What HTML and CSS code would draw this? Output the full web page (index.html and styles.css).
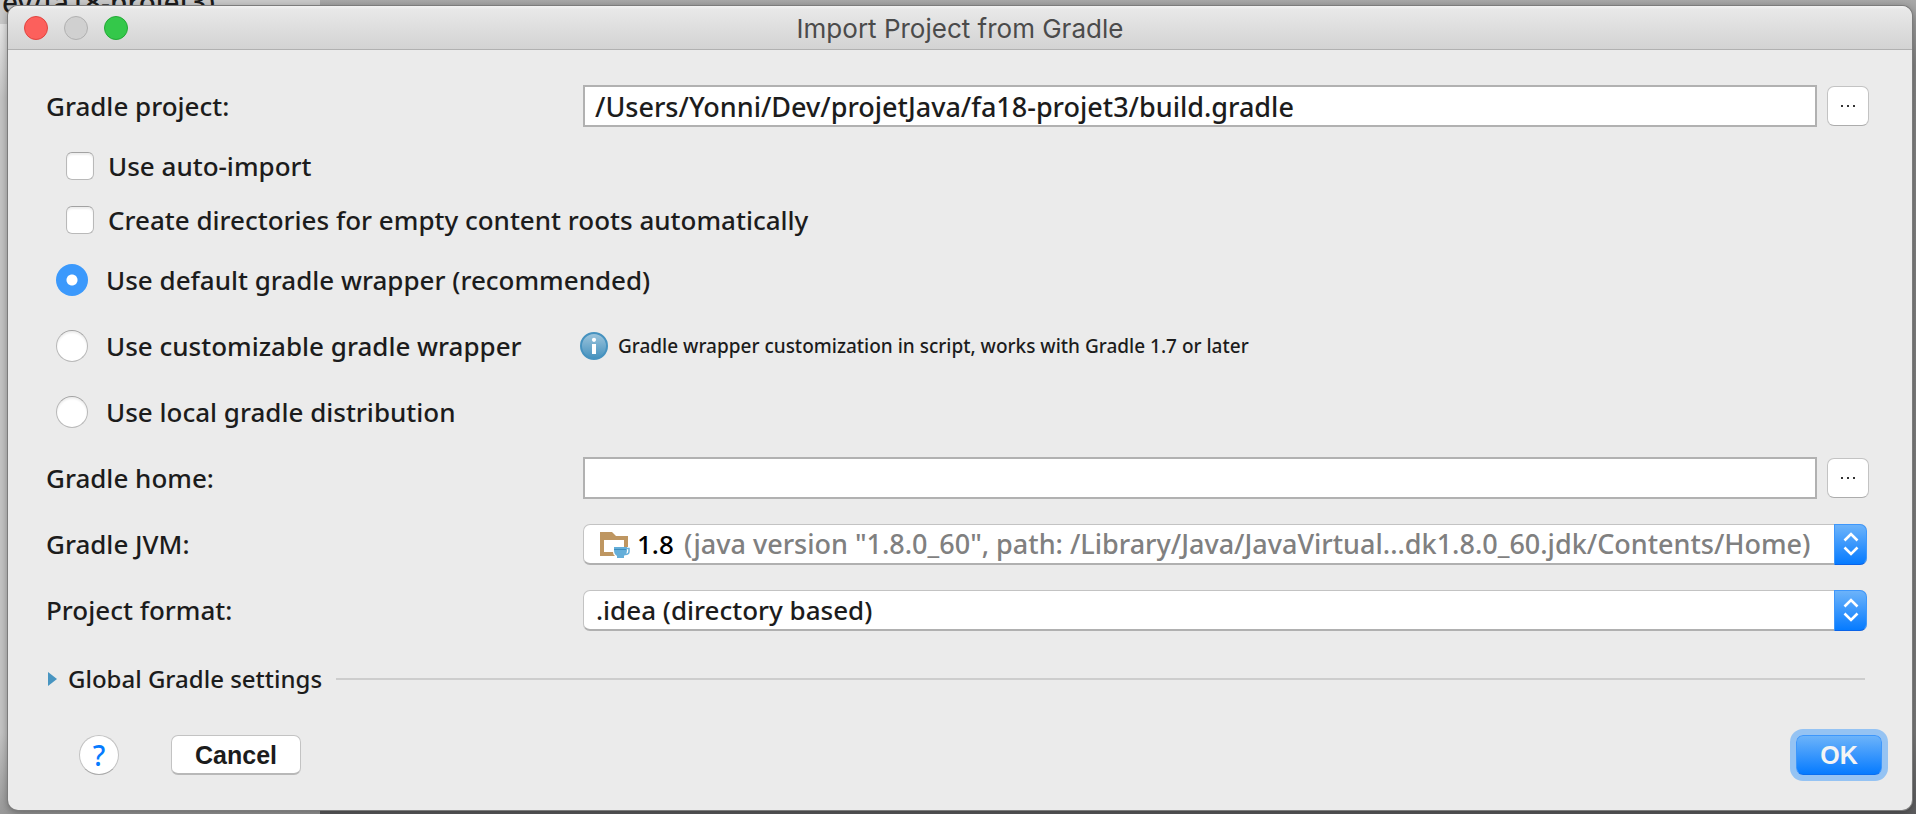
FILE: index.html
```html
<!DOCTYPE html>
<html lang="en">
<head>
<meta charset="utf-8">
<title>Import Project from Gradle</title>
<link rel="stylesheet" href="styles.css">
</head>
<body>
<div class="backdrop"><div class="back-window"><div class="back-title">ev/fa18-projet3)</div></div></div>
<main class="dialog">
  <header class="titlebar">
    <div class="lights">
      <button class="light close" type="button" aria-label="Close"></button>
      <button class="light minimize" type="button" aria-label="Minimize" disabled></button>
      <button class="light maximize" type="button" aria-label="Zoom"></button>
    </div>
    <h1 class="title">Import Project from Gradle</h1>
  </header>
  <form class="form">
    <div class="row">
      <label for="project">Gradle project:</label>
      <div class="field">
        <input class="text" id="project" type="text" value="/Users/Yonni/Dev/projetJava/fa18-projet3/build.gradle">
        <button class="browse" type="button" aria-label="Browse for project"><svg width="16" height="4" viewBox="0 0 16 4"><path d="M1 1h2v2H1zM7 1h2v2H7zM13 1h2v2h-2z" fill="#333"/></svg></button>
      </div>
    </div>
    <div class="checks">
      <label class="option"><input class="check" type="checkbox">Use auto-import</label>
      <label class="option"><input class="check" type="checkbox">Create directories for empty content roots automatically</label>
    </div>
    <div class="radios">
      <label class="option"><input class="radio" type="radio" name="wrapper" checked>Use default gradle wrapper (recommended)</label>
      <div class="row radio-row">
        <label class="option"><input class="radio" type="radio" name="wrapper">Use customizable gradle wrapper</label>
        <p class="hint">
          <svg width="28" height="28" viewBox="0 0 28 28"><defs><linearGradient id="info" x1="0" y1="0" x2="0" y2="1"><stop offset="0" stop-color="#9fc6dd"/><stop offset="1" stop-color="#4390bd"/></linearGradient></defs><circle cx="14" cy="14" r="13" fill="url(#info)" stroke="#4692bf" stroke-width="2"/><circle cx="14" cy="7.8" r="2.1" fill="#fff"/><path d="M12 12h4v10h-4z" fill="#fff"/></svg>
          Gradle wrapper customization in script, works with Gradle 1.7 or later
        </p>
      </div>
      <label class="option"><input class="radio" type="radio" name="wrapper">Use local gradle distribution</label>
    </div>
    <div class="rows">
      <div class="row">
        <label for="home">Gradle home:</label>
        <div class="field">
          <input class="text" id="home" type="text">
          <button class="browse" type="button" aria-label="Browse for home"><svg width="16" height="4" viewBox="0 0 16 4"><path d="M1 1h2v2H1zM7 1h2v2H7zM13 1h2v2h-2z" fill="#333"/></svg></button>
        </div>
      </div>
      <div class="row">
        <label for="jvm">Gradle JVM:</label>
        <div class="combo">
          <select class="select with-icon" id="jvm"><option>1.8</option></select>
          <span class="jvm-info">
            <svg width="32" height="32" viewBox="0 0 32 32"><path fill="#be9661" fill-rule="evenodd" d="M2 4h12l4 4h12v11h-4v-7H6v12h9c0 2 1 3 2 4H2z"/><path fill="#64aed9" d="M16 19h13v3c0 4-2 5-3 6v2h-7v-2c-1-1-3-2-3-6z"/><path fill="#3c8dbd" d="M16 21h12v1H16z"/><path fill="none" stroke="#64aed9" stroke-width="1.5" d="M28 20.500h3v3c0 2-1 3-4 3"/></svg>
            <span class="jvm-path">(java version "1.8.0_60", path: /Library/Java/JavaVirtual...dk1.8.0_60.jdk/Contents/Home)</span>
          </span>
          <span class="arrows"><svg width="16" height="28" viewBox="0 0 16 28"><path d="M1.500 10.500 8 4l6.500 6.500M1.500 17.500 8 24l6.500-6.500" fill="none" stroke="#fff" stroke-width="2.600"/></svg></span>
        </div>
      </div>
      <div class="row">
        <label for="format">Project format:</label>
        <div class="combo">
          <select class="select" id="format"><option>.idea (directory based)</option></select>
          <span class="arrows"><svg width="16" height="28" viewBox="0 0 16 28"><path d="M1.500 10.500 8 4l6.500 6.500M1.500 17.500 8 24l6.500-6.500" fill="none" stroke="#fff" stroke-width="2.600"/></svg></span>
        </div>
      </div>
    </div>
    <button class="section" type="button" aria-expanded="false">
      <svg width="9" height="14" viewBox="0 0 9 14"><path d="M0 0l9 7-9 7z" fill="#4895c1"/></svg>
      <span>Global Gradle settings</span>
      <span class="rule"></span>
    </button>
    <footer class="footer">
      <button class="help" type="button">?</button>
      <button class="push" type="button">Cancel</button>
      <button class="push primary" type="submit">OK</button>
    </footer>
  </form>
</main>
</body>
</html>
```
FILE: styles.css
```css
* { box-sizing: border-box; }

body {
  margin: 0;
  min-height: 100vh;
  padding: 6px 4px 4px 8px;
  display: flex;
  background: linear-gradient(#a8a8a8, #858585 8%, #7b7b7b 90%, #5c5c5e);
  color: #1c1c1c;
  font: 500 26px/32px "Noto Sans", "Open Sans", sans-serif;
  overflow: hidden;
}

button, input, select { font: inherit; color: inherit; margin: 0; padding: 0; }
h1, p { margin: 0; }
svg { display: block; flex: none; }

.backdrop { position: absolute; inset: 0; overflow: hidden; }
.back-window {
  width: 320px;
  height: 100%;
  background: linear-gradient(#f0f0f0, #c4c4c4 12%, #c4c4c4 90%, #999);
}
.back-title {
  height: 24px;
  padding-left: 2px;
  font-size: 28px;
  line-height: 4px;
  background: #c9c9c9;
}

.dialog {
  position: relative;
  flex: 1;
  min-width: 0;
  display: flex;
  flex-direction: column;
  border-radius: 10px;
  background: #ebebeb;
  box-shadow: 0 0 0 1px #7c7c7c, 0 2px 8px rgba(0, 0, 0, .4);
  overflow: hidden;
}

.titlebar {
  display: grid;
  grid-template-columns: 1fr auto 1fr;
  align-items: center;
  height: 44px;
  padding: 0 16px;
  border-bottom: 1px solid #b1b1b1;
  background: linear-gradient(#f2f2f2, #e8e8e8 8%, #d3d3d3);
}
.lights { display: flex; gap: 16px; }
.light { width: 24px; height: 24px; border-radius: 50%; border: 1px solid; }
.close { background: #fc605c; border-color: #e0443f; }
.minimize { background: #d0d0d0; border-color: #b0b0b0; }
.maximize { background: #34c84a; border-color: #22a935; }
.title { padding-top: 2px; font: 400 26px/32px Inter, Roboto, sans-serif; color: #4b4b4b; }

.form { flex: 1; padding: 35px 45px 0 38px; }
.row {
  display: grid;
  grid-template-columns: 537px minmax(0, 1fr);
  align-items: center;
  height: 42px;
}
.field { display: flex; align-items: center; gap: 10px; margin-right: -2px; }
.text {
  flex: 1;
  min-width: 0;
  height: 42px;
  padding: 0 10px;
  border: 2px solid #b1b1b1;
  background: #fff;
  font-size: 27px;
  outline: none;
}
.browse {
  display: grid;
  place-items: center;
  width: 42px;
  height: 40px;
  border: 1px solid #c3c3c3;
  border-bottom-color: #acacac;
  border-radius: 7px;
  background: #fff;
}

.option { display: flex; align-items: center; height: 42px; }
.checks { display: grid; gap: 12px; margin: 18px 0; padding-left: 20px; }
.checks .option { gap: 14px; }
.radios { display: grid; gap: 24px; }
.radios .option { gap: 18px; padding-left: 10px; }
.check, .radio {
  appearance: none;
  flex: none;
  background: #fff;
  border: 1px solid #b9b9b9;
  border-top-color: #a2a2a2;
  box-shadow: inset 0 2px 2px #eee;
}
.check { width: 28px; height: 28px; border-radius: 6px; }
.radio { width: 32px; height: 32px; border-radius: 50%; }
.radio:checked {
  border: 0;
  background: radial-gradient(circle, #fff 5px, #3b99fc 6px);
  box-shadow: none;
}
.radio-row { grid-template-columns: 534px minmax(0, 1fr); }
.hint { display: flex; align-items: center; gap: 10px; font-size: 19px; }

.rows { display: grid; gap: 24px; margin-top: 24px; }
.combo { display: grid; align-items: center; grid-template-columns: minmax(0, 1fr) 33px; height: 41px; }
.select {
  grid-area: 1 / 1 / 2 / 3;
  appearance: none;
  width: 100%;
  height: 41px;
  padding: 0 46px 0 12px;
  border: 1px solid #c3c3c3;
  border-bottom: 2px solid #b0b0b0;
  border-radius: 7px;
  background: #fff;
}
.with-icon { padding-left: 53px; color: #000; }
.jvm-info {
  grid-area: 1 / 1;
  display: flex;
  align-items: center;
  gap: 54px;
  padding-left: 15px;
  color: #808080;
  font-size: 27px;
  pointer-events: none;
  white-space: nowrap;
}
.arrows {
  grid-area: 1 / 2;
  display: grid;
  place-items: center;
  height: 41px;
  border: 1px solid #3e97fb;
  border-bottom-color: #0a63e8;
  border-radius: 0 7px 7px 0;
  background: linear-gradient(#6cb3fa, #067bff);
  pointer-events: none;
}

.section {
  display: flex;
  align-items: center;
  gap: 11px;
  width: 100%;
  margin-top: 27px;
  padding: 0 2px;
  height: 42px;
  border: 0;
  background: none;
  font-size: 24px;
}
.rule { flex: 1; height: 2px; margin-left: 3px; background: #cdcdcd; }

.footer { display: flex; align-items: center; margin: 35px -15px 0 33px; height: 40px; }
.help {
  width: 40px;
  height: 40px;
  margin-right: 52px;
  border: 1px solid #c3c3c3;
  border-bottom-color: #aaa;
  border-radius: 50%;
  background: #fff;
  color: #067bff;
  font-size: 28px;
}
.push {
  width: 130px;
  height: 40px;
  border: 1px solid #c3c3c3;
  border-bottom: 2px solid #b8b8b8;
  border-radius: 7px;
  background: #fff;
  font: 700 25px/36px "Liberation Sans", sans-serif;
}
.primary {
  width: 86px;
  margin-left: auto;
  border: 1px solid #3e97fb;
  border-bottom-color: #0a6ff0;
  background: linear-gradient(#6cb3fa, #067bff);
  color: #f4f4f4;
  box-shadow: 0 0 0 6px #95c3f3;
}
```
